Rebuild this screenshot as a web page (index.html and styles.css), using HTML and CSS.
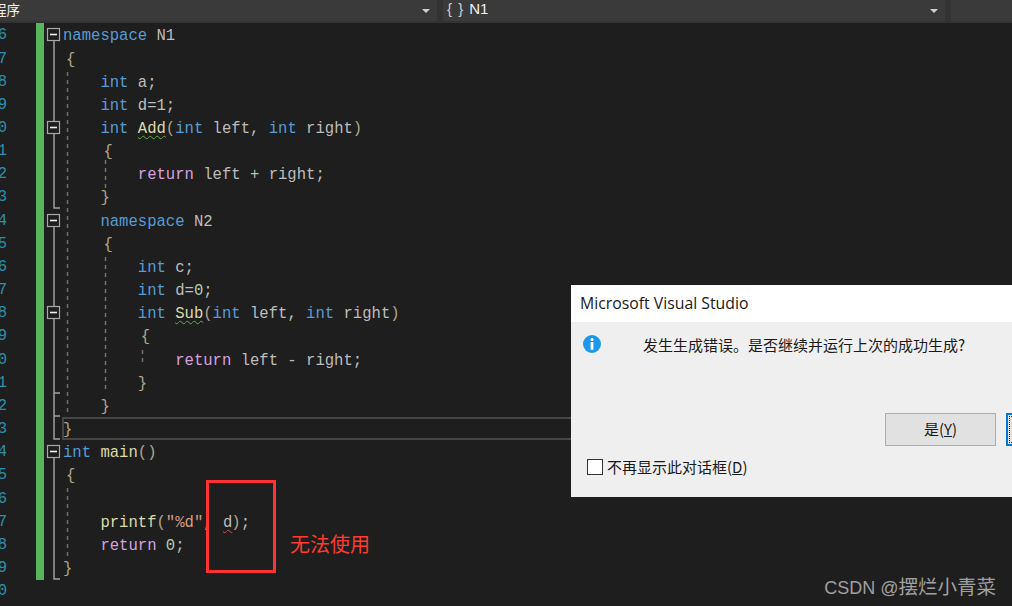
FILE: index.html
```html
<!DOCTYPE html>
<html lang="zh">
<head>
<meta charset="utf-8">
<title>Microsoft Visual Studio</title>
<link rel="stylesheet" href="styles.css">
</head>
<body>
<div class="app">
  <header class="topbar">
    <div class="seg seg-a"><span class="seg-clip">程序</span><i class="arrow"></i></div>
    <div class="seg seg-b"><span class="scope">{ }</span><span class="seg-name">N1</span><i class="arrow"></i></div>
    <div class="seg seg-c"></div>
  </header>
  <main class="editor">
    <div class="gutter">
      <div class="num"><span>6</span></div><div class="num"><span>7</span></div><div class="num"><span>8</span></div><div class="num"><span>9</span></div><div class="num"><span>0</span></div>
      <div class="num"><span>1</span></div><div class="num"><span>2</span></div><div class="num"><span>3</span></div><div class="num"><span>4</span></div><div class="num"><span>5</span></div>
      <div class="num"><span>6</span></div><div class="num"><span>7</span></div><div class="num"><span>8</span></div><div class="num"><span>9</span></div><div class="num"><span>0</span></div>
      <div class="num"><span>1</span></div><div class="num"><span>2</span></div><div class="num"><span>3</span></div><div class="num"><span>4</span></div><div class="num"><span>5</span></div>
      <div class="num"><span>6</span></div><div class="num"><span>7</span></div><div class="num"><span>8</span></div><div class="num"><span>9</span></div><div class="num"><span>0</span></div>
    </div>
    <div class="change-bar"></div>
    <div class="fold-margin"></div>
    <div class="code">
<div class="row"><b class="k">namespace</b> <b class="n">N1</b></div>
<div class="row"><b class="p open">{</b></div>
<div class="row">    <b class="k">int</b> a;</div>
<div class="row">    <b class="k">int</b> d=<b class="v">1</b>;</div>
<div class="row">    <b class="k">int</b> <b class="f warn">Add</b><b class="p">(</b><b class="k">int</b> left, <b class="k">int</b> right<b class="p">)</b></div>
<div class="row">    <b class="p open">{</b></div>
<div class="row">        <b class="c">return</b> left + right;</div>
<div class="row">    <b class="p">}</b></div>
<div class="row">    <b class="k">namespace</b> <b class="n">N2</b></div>
<div class="row">    <b class="p open">{</b></div>
<div class="row">        <b class="k">int</b> c;</div>
<div class="row">        <b class="k">int</b> d=<b class="v">0</b>;</div>
<div class="row">        <b class="k">int</b> <b class="f warn">Sub</b><b class="p">(</b><b class="k">int</b> left, <b class="k">int</b> right<b class="p">)</b></div>
<div class="row">        <b class="p open">{</b></div>
<div class="row">            <b class="c">return</b> left - right;</div>
<div class="row">        <b class="p">}</b></div>
<div class="row">    <b class="p">}</b></div>
<div class="row current"><b class="p">}</b></div>
<div class="row"><b class="k">int</b> <b class="f">main</b><b class="p">()</b></div>
<div class="row"><b class="p open">{</b></div>
<div class="row"></div>
<div class="row">    <b class="f">printf</b><b class="p">(</b><b class="s">"%d"</b>, <b class="err">d</b><b class="p">)</b>;</div>
<div class="row">    <b class="c">return</b> <b class="v">0</b>;</div>
<div class="row"><b class="p">}</b></div>
    </div>
  </main>

  <svg class="overlay" width="1012" height="606" viewBox="0 0 1012 606" aria-hidden="true">
    <g class="guides">
      <path d="M67.5 72V413M105.5 160V190M105.5 257V393M142.5 350V365M67.5 488V560"/>
    </g>
    <g class="folds">
      <path class="fold-line" d="M54 41V121M54 134V208H60M54 227V306M54 319V393H60M54 393V439H60M54 416H60M54 458V579H60"/>
      <g class="fold-box"><rect x="47.5" y="28.5" width="12" height="12"/><path d="M50 34.5h7"/></g>
      <g class="fold-box"><rect x="47.5" y="121.5" width="12" height="12"/><path d="M50 127.5h7"/></g>
      <g class="fold-box"><rect x="47.5" y="214.5" width="12" height="12"/><path d="M50 220.5h7"/></g>
      <g class="fold-box"><rect x="47.5" y="306.5" width="12" height="12"/><path d="M50 312.5h7"/></g>
      <g class="fold-box"><rect x="47.5" y="445.5" width="12" height="12"/><path d="M50 451.5h7"/></g>
    </g>
  </svg>

  <div class="redbox"></div>
  <div class="note">无法使用</div>

  <section class="dialog">
    <div class="dlg-title">Microsoft Visual Studio</div>
    <div class="dlg-body">
      <div class="dlg-msg">
        <svg class="info" width="20" height="20" viewBox="0 0 20 20" aria-hidden="true">
          <circle cx="10" cy="10" r="9" fill="#1c97ea"/>
          <circle cx="10" cy="5.4" r="1.5" fill="#fff"/>
          <rect x="8.6" y="8" width="2.8" height="7.8" fill="#fff"/>
        </svg>
        <p class="dlg-text">发生生成错误。是否继续并运行上次的成功生成?</p>
      </div>
      <div class="dlg-btns">
        <div class="btn">是(<u>Y</u>)</div>
        <div class="btn btn-default"></div>
      </div>
      <label class="dlg-check"><i class="box"></i><span>不再显示此对话框(<u>D</u>)</span></label>
    </div>
  </section>

  <div class="watermark"><span class="wm-a">CSDN @</span><span class="wm-b">摆烂小青菜</span></div>
</div>
</body>
</html>
```
FILE: styles.css
```css
* { box-sizing: border-box; }
html, body { margin: 0; padding: 0; }
body { background: #1e1e1e; }
.app {
  position: relative;
  width: 1012px;
  height: 606px;
  overflow: hidden;
  background: #1e1e1e;
  display: flex;
  flex-direction: column;
}
.topbar {
  height: 23px;
  flex: none;
  display: flex;
  gap: 6px;
  background: #333333;
  padding-bottom: 2px;
  font: 14px "Liberation Sans", "Noto Sans CJK SC", sans-serif;
  color: #f1f1f1;
}
.seg {
  background: #3a3a3a;
  display: flex;
  align-items: center;
  position: relative;
  padding-bottom: 4px;
}
.seg-a { width: 437px; padding-right: 7px; }
.seg-b { width: 502px; padding-right: 7px; padding-left: 4px; }
.seg-c { flex: 1; }
.seg-clip { margin-left: -7px; font-size: 13.5px; }
.scope { letter-spacing: 1px; margin-right: 5px; color: #d0d0d0; font-size: 15px; }
.seg-name { font-size: 15px; }
.arrow {
  margin-left: auto;
  margin-top: 4px;
  width: 0;
  height: 0;
  border-left: 4px solid transparent;
  border-right: 4px solid transparent;
  border-top: 4px solid #d0d0d0;
}
.editor {
  flex: 1;
  display: flex;
  align-items: flex-start;
  padding-top: 0.4px;
  font: 15.58px/23.17px "Liberation Mono", monospace;
  color: #bdbdbd;
}
.gutter { width: 36px; flex: none; color: #2b91af; margin-top: 1px; }
.num { width: 7px; height: 23.17px; display: flex; justify-content: flex-end; overflow: hidden; }
.change-bar { width: 8px; height: 557px; flex: none; background: #57b65c; margin-top: -0.4px; }
.fold-margin { width: 18px; flex: none; }
.code { flex: 1; min-width: 0; }
.row { height: 23.17px; white-space: pre; padding: 2px 0 0 1px; }
.row b { font-weight: normal; }
.row.current { box-shadow: inset 0 0 0 2px #464646; }
.k { color: #569cd6; }
.n { color: #bdbdbd; }
.c { color: #d8a0df; }
.f { color: #dcdcaa; }
.v { color: #b5cea8; }
.s { color: #d69d85; }
.p { color: #b0a58a; }
.open { margin-left: 3px; margin-right: -3px; }
.warn {
  text-decoration: underline wavy #5fae4d 1px;
  text-underline-offset: 2px;
}
.err {
  color: #bdbdbd;
  margin-left: 1px;
  margin-right: -1px;
  text-decoration: underline wavy #d64b3b 1px;
  text-underline-offset: 2px;
}
.overlay { position: absolute; left: 0; top: 0; pointer-events: none; }
.guides path { fill: none; stroke: #707070; stroke-width: 1.5; stroke-dasharray: 4 4; }
.fold-line { fill: none; stroke: #a0a0a0; stroke-width: 1.5; }
.fold-box rect { fill: #1e1e1e; stroke: #a8a8a8; stroke-width: 1.2; }
.fold-box path { stroke: #f0f0f0; stroke-width: 1.6; fill: none; }
.redbox {
  position: absolute;
  left: 206px;
  top: 480px;
  width: 70px;
  height: 93px;
  border: 3px solid #ff3333;
}
.note {
  position: absolute;
  left: 290px;
  top: 532px;
  font: 20px/24px "Noto Sans CJK SC", sans-serif;
  color: #ff3b30;
}
.dialog {
  position: absolute;
  left: 571px;
  top: 285px;
  width: 460px;
  height: 212px;
  display: flex;
  flex-direction: column;
  font-family: "Noto Sans CJK SC", sans-serif;
  color: #1a1a1a;
}
.dlg-title {
  height: 37px;
  flex: none;
  background: #fff;
  padding-left: 9px;
  font: 15.8px/37px "Open Sans", sans-serif;
}
.dlg-body {
  flex: 1;
  background: #efefef;
  display: flex;
  flex-direction: column;
  padding: 12px 0 0 11px;
}
.dlg-msg { display: flex; align-items: flex-start; height: 79px; flex: none; }
.info { flex: none; }
.dlg-text { margin: 0 0 0 41px; font-size: 15px; line-height: 22px; white-space: nowrap; }
.dlg-btns { display: flex; gap: 10px; margin-left: 303px; flex: none; }
.btn {
  width: 111px;
  height: 33px;
  flex: none;
  background: #e1e1e1;
  border: 1px solid #adadad;
  font-size: 15px;
  line-height: 30px;
  text-align: center;
}
.btn-default { border: 2px solid #0078d7; position: relative; }
.btn-default::after {
  content: "";
  position: absolute;
  inset: 1px;
  border: 1px dotted #222;
}
.dlg-check {
  display: flex;
  align-items: center;
  gap: 4px;
  margin: 11px 0 0 5px;
  font-size: 15px;
  line-height: 20px;
}
.box { width: 16px; height: 16px; flex: none; background: #fff; border: 1px solid #333; }
.watermark {
  position: absolute;
  right: 16px;
  top: 573px;
  color: #a0a0a0;
  line-height: 26px;
  white-space: nowrap;
  font-family: "Liberation Sans", "Noto Sans CJK SC", sans-serif;
}
.wm-a { font-size: 18px; }
.wm-b { font-size: 19.5px; font-family: "Noto Sans CJK SC", sans-serif; }
```
